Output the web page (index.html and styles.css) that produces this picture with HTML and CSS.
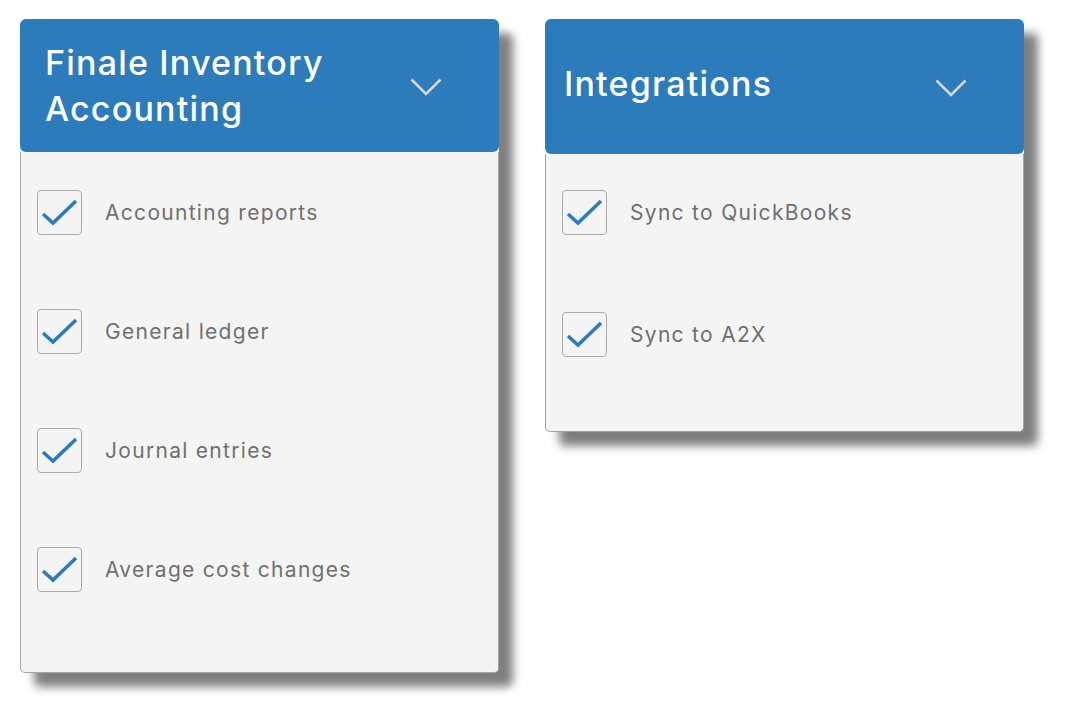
FILE: index.html
```html
<!DOCTYPE html>
<html lang="en">
<head>
  <meta charset="UTF-8">
  <meta name="viewport" content="width=device-width, initial-scale=1.0">
  <title>Accounting features</title>
  <link rel="stylesheet" href="styles.css">
</head>
<body>

  <div class="cards">

    <div class="card">
      <div class="card-header">
        <h2>Finale Inventory Accounting</h2>
        <svg class="chevron" width="32" height="18" viewBox="0 0 32 18"><polyline points="1.5,1.5 16,16 30.5,1.5" /></svg>
      </div>
      <div class="card-body">
        <label class="item">
          <span class="check"><svg width="45" height="45" viewBox="0 0 45 45"><polyline points="6,24 16,33 39,11" /></svg></span>
          Accounting reports
        </label>
        <label class="item">
          <span class="check"><svg width="45" height="45" viewBox="0 0 45 45"><polyline points="6,24 16,33 39,11" /></svg></span>
          General ledger
        </label>
        <label class="item">
          <span class="check"><svg width="45" height="45" viewBox="0 0 45 45"><polyline points="6,24 16,33 39,11" /></svg></span>
          Journal entries
        </label>
        <label class="item">
          <span class="check"><svg width="45" height="45" viewBox="0 0 45 45"><polyline points="6,24 16,33 39,11" /></svg></span>
          Average cost changes
        </label>
      </div>
    </div>

    <div class="card card-short">
      <div class="card-header">
        <h2>Integrations</h2>
        <svg class="chevron" width="32" height="18" viewBox="0 0 32 18"><polyline points="1.5,1.5 16,16 30.5,1.5" /></svg>
      </div>
      <div class="card-body">
        <label class="item">
          <span class="check"><svg width="45" height="45" viewBox="0 0 45 45"><polyline points="6,24 16,33 39,11" /></svg></span>
          Sync to QuickBooks
        </label>
        <label class="item">
          <span class="check"><svg width="45" height="45" viewBox="0 0 45 45"><polyline points="6,24 16,33 39,11" /></svg></span>
          Sync to A2X
        </label>
      </div>
    </div>

  </div>

</body>
</html>
```

FILE: styles.css
```css
/* Page */
body {
  margin: 0;
  background: #ffffff;
  font-family: Inter, "Open Sans", sans-serif;
}

.cards {
  display: flex;
  align-items: flex-start;
  gap: 46px;
  padding: 19px 0 55px 20px;
}

/* Card */
.card {
  width: 479px;
  border-radius: 6px;
  box-shadow: 14px 14px 10px rgba(0, 0, 0, 0.5);
}

.card-header {
  display: flex;
  align-items: center;
  justify-content: space-between;
  height: 133px;
  padding: 0 57px 0 25px;
  box-sizing: border-box;
  background: #2c7bba;
  border-radius: 6px;
}

.card-short .card-header {
  height: 135px;
  padding-left: 19px;
}

.card-header h2 {
  margin: 0;
  max-width: 340px;
  color: #ffffff;
  font-size: 34px;
  font-weight: 500;
  line-height: 46px;
  letter-spacing: 1.2px;
}

.card-short .card-header h2 {
  margin-bottom: 6px;
}

.chevron {
  flex: none;
  margin-top: 2px;
}

.chevron polyline {
  fill: none;
  stroke: #d8d8d8;
  stroke-width: 2.5;
}

/* Body with checkboxes */
.card-body {
  display: flex;
  flex-direction: column;
  gap: 74px;
  padding: 38px 16px 80px;
  background: #f4f4f4;
  border: 1px solid #a3a3a3;
  border-top: none;
  border-radius: 0 0 5px 5px;
}

.card-short .card-body {
  gap: 77px;
  padding-top: 36px;
  padding-bottom: 74px;
}

.item {
  display: flex;
  align-items: center;
  gap: 23px;
  color: #707070;
  font-size: 21px;
  letter-spacing: 1.3px;
}

.check {
  display: block;
  width: 45px;
  height: 45px;
  box-sizing: border-box;
  border: 1.5px solid #aaaaaa;
  border-radius: 4px;
  position: relative;
}

.check svg {
  position: absolute;
  top: -1.5px;
  left: -1.5px;
}

.check polyline {
  fill: none;
  stroke: #2b7bbd;
  stroke-width: 3.5;
}
```
